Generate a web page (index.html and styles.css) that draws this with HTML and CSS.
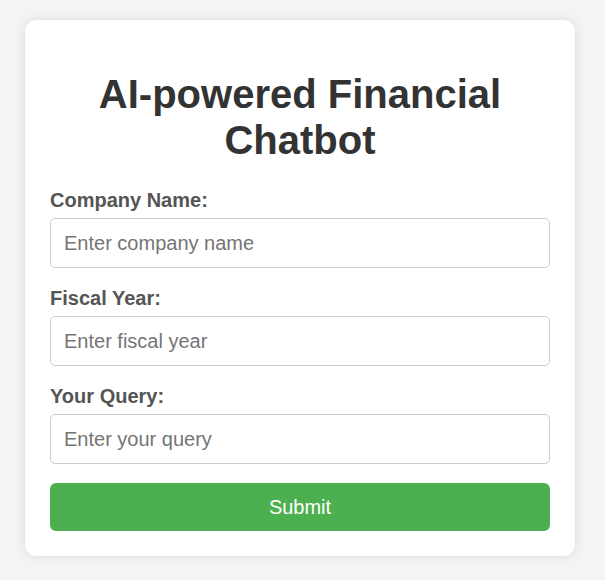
FILE: index.html
```html
<!DOCTYPE html>
<html lang="en">
<head>
<meta charset="utf-8">
<title>AI-powered Financial Chatbot</title>
<link rel="stylesheet" href="styles.css">
</head>
<body>
<div class="card">
  <h1 class="title">AI-powered Financial Chatbot</h1>
  <form class="form">
    <label class="label" for="company">Company Name:</label>
    <input class="input" id="company" type="text" placeholder="Enter company name">
    <label class="label" for="year">Fiscal Year:</label>
    <input class="input" id="year" type="text" placeholder="Enter fiscal year">
    <label class="label" for="query">Your Query:</label>
    <input class="input" id="query" type="text" placeholder="Enter your query">
    <button class="submit" type="button">Submit</button>
  </form>
</div>
</body>
</html>
```
FILE: styles.css
```css
html, body {
  margin: 0;
  padding: 0;
}
body {
  background: #f4f4f4;
  font-family: "Liberation Sans", Arial, sans-serif;
  padding: 20px 25px;
}
.card {
  width: 550px;
  box-sizing: border-box;
  background: #fff;
  padding: 25px;
  border-radius: 12px;
  box-shadow: 0 0 12px rgba(0, 0, 0, 0.1);
}
.title {
  font-size: 40px;
  font-weight: bold;
  color: #333;
  text-align: center;
  margin: 26px 0 26px;
  line-height: 46px;
}
.form {
  display: flex;
  flex-direction: column;
}
.label {
  display: block;
  font-size: 20px;
  font-weight: bold;
  color: #555;
  line-height: 23px;
  margin-bottom: 6px;
}
.input {
  box-sizing: border-box;
  width: 100%;
  height: 50px;
  padding: 12px 13px;
  font-family: "Liberation Sans", Arial, sans-serif;
  font-size: 20px;
  border: 1px solid #ccc;
  border-radius: 5px;
  margin: 0 0 19px;
  color: #333;
}
.input::placeholder {
  color: #757575;
}
.submit {
  height: 48px;
  width: 100%;
  background: #4caf50;
  color: #fff;
  border: none;
  border-radius: 6px;
  font-family: "Liberation Sans", Arial, sans-serif;
  font-size: 20px;
  cursor: pointer;
}
```
